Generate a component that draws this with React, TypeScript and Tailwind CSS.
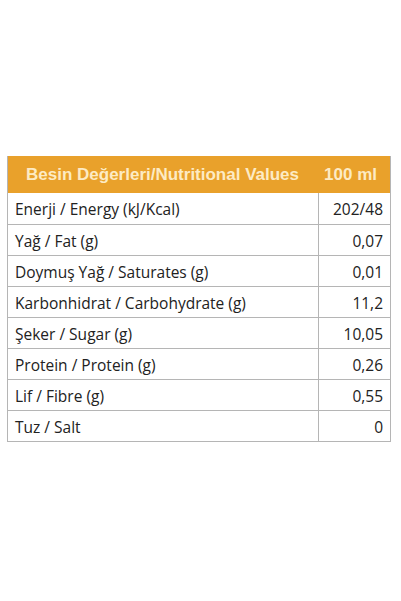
import React from "react";

const rows: [string, string][] = [
  ["Enerji / Energy (kJ/Kcal)", "202/48"],
  ["Yağ / Fat (g)", "0,07"],
  ["Doymuş Yağ / Saturates (g)", "0,01"],
  ["Karbonhidrat / Carbohydrate (g)", "11,2"],
  ["Şeker / Sugar (g)", "10,05"],
  ["Protein / Protein (g)", "0,26"],
  ["Lif / Fibre (g)", "0,55"],
  ["Tuz / Salt", "0"],
];

export default function App() {
  return (
    <div className="w-[401px] h-[601px] bg-white pt-[156px] pl-[7px]">
      <div className="w-[384px] border-l border-r border-b border-[#b5b5b5]">
        <div
          className="flex h-[37px] items-center bg-[#e9a12b] text-[#fdebc4] font-bold text-[17px]"
          style={{ fontFamily: '"Liberation Sans", Arial, sans-serif' }}
        >
          <div className="w-[310px] pl-[18px]">Besin Değerleri/Nutritional Values</div>
          <div className="flex-1 text-right pr-[13px]">100 ml</div>
        </div>
        {rows.map(([k, v], i) => (
          <div
            key={i}
            className={`flex h-[31px] pt-[3px] text-[15.5px] text-[#222] ${i === 0 ? "" : "border-t border-[#b5b5b5]"}`}
            style={{ fontFamily: '"Open Sans", "Noto Sans", sans-serif' }}
          >
            <div className="w-[310px] pl-[7px] flex items-center">{k}</div>
            <div className="flex-1 border-l border-[#b5b5b5] -mt-[3px] pt-[3px] flex items-center justify-end pr-[7px]">{v}</div>
          </div>
        ))}
      </div>
    </div>
  );
}
